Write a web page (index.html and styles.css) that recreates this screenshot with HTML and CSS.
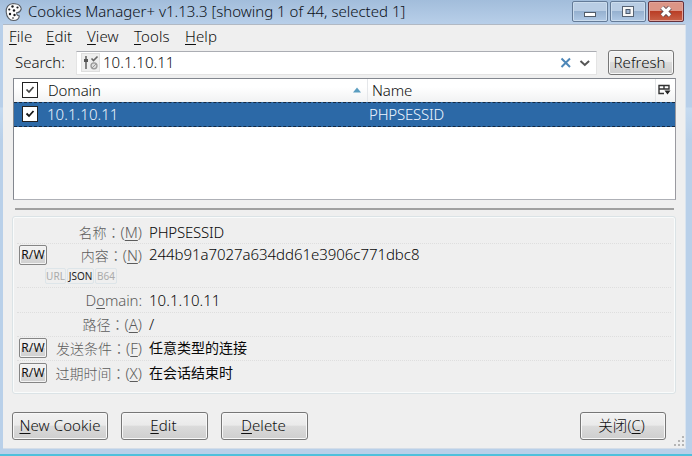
FILE: index.html
```
<!DOCTYPE html>
<html lang="zh-CN">
<head>
<meta charset="utf-8">
<title>Cookies Manager+</title>
<link rel="stylesheet" href="styles.css">
</head>
<body>
<div class="window">
  <header class="titlebar">
    <svg class="cookie" width="18" height="20" viewBox="0 0 18 20"><path d="M8 1.500C3 2 .8 6 1.200 10 1.500 15 4.500 18.500 8.500 18.500c3.500 0 5.500-2 5.800-4.500-2-.3-3-1.500-2.500-3.500 2 .3 3.500-1 4.500-3.500-.5-3-3-5-5-5-1-.4-2-.5-3.300-.5z" fill="#fcfcfc" stroke="#555b62" stroke-width="1.100"/><g fill="#17191c"><circle cx="7.500" cy="4.500" r="1.200"/><circle cx="4.300" cy="7.500" r="1.100"/><circle cx="9" cy="8.500" r="1.200"/><circle cx="12.500" cy="5.500" r="1.100"/><circle cx="5" cy="12" r="1.200"/><circle cx="9.500" cy="13" r="1.200"/><circle cx="8" cy="16" r=".8"/></g></svg>
    <h1 class="title">Cookies Manager+ v1.13.3 [showing 1 of 44, selected 1]</h1>
    <div class="controls">
      <span class="control"><svg width="34" height="19" viewBox="0 0 34 19"><rect x="11.500" y="10.500" width="11" height="4" fill="#fff" stroke="#515b68"/></svg></span>
      <span class="control"><svg width="34" height="19" viewBox="0 0 34 19"><rect x="11.500" y="4.500" width="11" height="10" fill="#f7f7f7" stroke="#566273"/><rect x="15" y="7.500" width="4" height="4" fill="#9fb5d2" stroke="#4c596b"/></svg></span>
      <span class="control close"><svg width="34" height="19" viewBox="0 0 34 19"><path d="M13 5.500l8 8M21 5.500l-8 8" stroke="#5d4a50" stroke-width="5"/><path d="M13 5.500l8 8M21 5.500l-8 8" stroke="#fff" stroke-width="3.200"/></svg></span>
    </div>
  </header>
  <main class="content">
    <nav class="menu"><span class="m-file"><u>F</u>ile</span><span class="m-edit"><u>E</u>dit</span><span class="m-view"><u>V</u>iew</span><span class="m-tools"><u>T</u>ools</span><span class="m-help"><u>H</u>elp</span></nav>
    <div class="search">
      <label class="search-label">Search:</label>
      <div class="field">
        <svg class="filter" width="19" height="19" viewBox="0 0 19 19"><rect x=".5" y=".5" width="18" height="18" fill="#eee" stroke="#dedede"/><path d="M5 3v13" stroke="#666" stroke-width="1.600"/><path d="M3 6h4v3H3z" fill="#555"/><path d="M10.500 5.500l2 2 4-4" fill="none" stroke="#666" stroke-width="1.600"/><circle cx="13" cy="12.800" r="3" fill="#ddd" stroke="#999" stroke-width="1.300"/><path d="M11 15l4-4" stroke="#999"/></svg>
        <span class="query">10.1.10.11</span>
        <svg class="field-icons" width="32" height="12" viewBox="0 0 32 12"><path d="M1.500 1.500l8.500 8.500M10 1.500L1.500 10" stroke="#4d87b8" stroke-width="2"/><path d="M20.500 4l4.300 4 4.300-4" fill="none" stroke="#555" stroke-width="2"/></svg>
      </div>
      <button class="button refresh"><span>Refresh</span></button>
    </div>
    <section class="tree">
      <div class="thead">
        <span class="check head-check"><svg width="10" height="10" viewBox="0 0 10 10"><path d="M1.500 4.500l2.500 2.500 4.500-5" fill="none" stroke="#444" stroke-width="1.700"/></svg></span>
        <span class="col-domain"><span class="t-domain">Domain</span><svg width="8" height="6" viewBox="0 0 8 6"><path d="M0 5.500L4 .5l4 5z" fill="#5a9dc0"/></svg></span>
        <span class="col-name"><span class="t-name">Name</span></span>
        <span class="picker"><svg width="13" height="12" viewBox="0 0 13 12"><path d="M1 1.500h10v3.500H1zM6 1.500V5M1 5v4.500h5" fill="none" stroke="#333" stroke-width="1.400"/><path d="M6.500 6.500h6l-3 4z" fill="#222"/></svg></span>
      </div>
      <div class="trow">
        <span class="check"><svg width="10" height="10" viewBox="0 0 10 10"><path d="M1.500 4.500l2.500 2.500 4.500-5" fill="none" stroke="#151515" stroke-width="1.800"/></svg></span>
        <span class="cell-domain"><span class="t-ip">10.1.10.11</span></span>
        <span class="t-sess">PHPSESSID</span>
      </div>
    </section>
    <div class="splitter"></div>
    <section class="details">
      <div class="line r1"><span class="label">名称<span class="colon" lang="zh-TW">：</span><span class="key">(<u>M</u>)</span></span><span class="value v-name">PHPSESSID</span></div>
      <div class="group r2">
        <div class="line"><button class="rw">R/W</button><span class="label">内容<span class="colon" lang="zh-TW">：</span><span class="key">(<u>N</u>)</span></span><span class="value v-hash">244b91a7027a634dd61e3906c771dbc8</span></div>
        <div class="tags"><span class="tag url">URL</span><span class="tag json">JSON</span><span class="tag b64">B64</span></div>
      </div>
      <div class="line r3"><span class="label t-dom">D<u>o</u>main:</span><span class="value v-ip">10.1.10.11</span></div>
      <div class="line r4"><span class="label">路径<span class="colon" lang="zh-TW">：</span><span class="key">(<u>A</u>)</span></span><span class="value">/</span></div>
      <div class="line r5"><button class="rw">R/W</button><span class="label">发送条件<span class="colon" lang="zh-TW">：</span><span class="key">(<u>F</u>)</span></span><span class="value cn">任意类型的连接</span></div>
      <div class="line r6"><button class="rw">R/W</button><span class="label">过期时间<span class="colon" lang="zh-TW">：</span><span class="key">(<u>X</u>)</span></span><span class="value cn">在会话结束时</span></div>
    </section>
    <footer class="actions">
      <button class="button new"><span><u>N</u>ew Cookie</span></button>
      <button class="button mid"><span><u>E</u>dit</span></button>
      <button class="button mid"><span><u>D</u>elete</span></button>
      <button class="button shut"><span>关闭(<u>C</u>)</span></button>
    </footer>
    <svg class="grip" width="11" height="11" viewBox="0 0 11 11"><path d="M8 0h2v2H8zM4 4h2v2H4zM8 4h2v2H8zM0 8h2v2H0zM4 8h2v2H4zM8 8h2v2H8z" fill="#b5b5b5"/></svg>
  </main>
</div>
</body>
</html>
```
FILE: styles.css
```
* { box-sizing: border-box; }
body {
  margin: 0;
  font: 300 15px/20px "Noto Sans", "Noto Sans CJK SC", sans-serif;
  color: #101010;
}
svg { display: block; flex: none; }
u { text-decoration-thickness: 1px; text-underline-offset: 2px; }
button { font: inherit; color: inherit; padding: 0; }
span { white-space: nowrap; }
.window {
  width: 692px;
  height: 456px;
  padding: 0 6px 0 3px;
  background: linear-gradient(#a2bddb, #b8cfe9 24px, #b8cfe9 107px, #c5daf0 108px, #b9d0e9 140px);
  border-bottom: 2px solid #4fc0dc;
}
.titlebar { display: flex; height: 24px; padding-left: 2px; }
.cookie { margin-top: 2px; }
.title { margin: 1px 0 0 5px; font-size: 15px; font-weight: 300; line-height: 20px; white-space: nowrap; color: #0c1118; }
.controls { display: flex; gap: 2px; margin: 1px 2px 0 auto; }
.control {
  width: 36px;
  height: 21px;
  border: 1px solid #647b98;
  border-radius: 2px;
  box-shadow: inset 0 0 0 1px #cbdced;
  background: linear-gradient(#b9cde4 45%, #96b1d0 50%, #b0c9e5);
}
.close { border-color: #64313c; box-shadow: inset 0 0 0 1px #e2a49a; background: linear-gradient(#dc9586 45%, #ba3e26 50%, #c86248); }
.content {
  position: relative;
  height: 425px;
  background: #efefef;
  border-top: 1px solid #b1b9c4;
  border-right: 1px solid #d9e4ef;
  border-bottom: 1px solid #d4dde8;
}
.menu { display: flex; height: 25px; padding: 1px 0 0 6px; letter-spacing: .1px; }
.menu span { flex: none; }
.m-file { width: 37px; }
.m-edit { width: 41px; }
.m-view { width: 47px; }
.m-tools { width: 51px; }
.search { display: flex; height: 28px; padding-left: 12px; }
.search-label { width: 61px; padding-top: 2px; }
.field { display: flex; width: 521px; height: 24px; margin-top: 1px; background: #fff; border: 1px solid #e4e4e4; border-top-color: #abadb3; }
.filter { margin: 1px 0 0 4px; }
.query { margin: 0 auto 0 3px; letter-spacing: .05px; }
.field-icons { margin: 5px 4px 0 0; }
.button {
  border: 1px solid #777;
  border-radius: 3px;
  box-shadow: inset 0 0 0 1px #f8f8f8;
  background: linear-gradient(#f2f2f2, #eaeaea 47%, #dbdbdb 50%, #cecece);
}
.button span { display: block; margin: -2px 0 0; }
.refresh { width: 66px; height: 25px; margin-left: 11px; padding-right: 3px; }
.tree { width: 663px; height: 122px; margin-left: 10px; background: #fff; border: 1px solid #83878f; border-right-color: #9a9aa0; border-bottom-color: #aeb0b6; }
.thead { display: flex; height: 23px; background: linear-gradient(#fff 35%, #f1f2f3); }
.check { display: grid; place-items: center; flex: none; width: 16px; height: 16px; margin: 4px 0 0 8px; background: #fff; border: 1px solid #222; }
.head-check { margin-top: 3px; }
.col-domain { display: flex; width: 330px; padding: 1px 6px 0 10px; justify-content: space-between; border-right: 1px solid #e5e7ea; letter-spacing: -.1px; }
.col-domain svg { margin-top: 7px; }
.col-name { width: 286px; padding: 1px 0 0 4px; margin-right: 1px; letter-spacing: -.1px; }
.picker { padding: 5px 0 0 2px; border-left: 1px solid #e3e5e7; }
.trow { display: flex; height: 25px; background: #2c69a7; color: #edf5ff; border: dashed #152a42; border-width: 1px 0; }
.trow .check { margin-top: 3px; }
.cell-domain { width: 331px; padding: 1px 0 0 9px; letter-spacing: .05px; }
.t-sess { padding-top: 1px; letter-spacing: -.2px; }
.splitter { width: 659px; height: 2px; margin: 8px 0 6px 12px; background: #a0a0a0; }
.details { width: 664px; height: 178px; margin-left: 9px; padding: 1px 4px; border: 1px solid #dbe3e6; border-radius: 3px; box-shadow: inset 0 0 0 1px #f9fbfb; }
.line { display: flex; align-items: flex-start; }
.r1, .r2, .r3, .r4, .r5 { border-bottom: 1px dotted #dedede; }
.r1 { height: 26px; padding-top: 4px; }
.r2 { height: 44px; padding-top: 1px; }
.r3 { height: 25px; padding-top: 2px; }
.r4 { height: 24px; padding-top: 1px; }
.r5 { height: 24px; padding-top: 1px; }
.r6 { height: 26px; padding-top: 2px; }
.rw { width: 28px; height: 20px; margin: 0 -30px 0 2px; border: 1px solid #858585; border-radius: 2px; font-size: 12px; font-weight: 400; line-height: 18px; letter-spacing: .1px; background: linear-gradient(#f0f0f0 48%, #dadada 52%, #d0d0d0); box-shadow: inset 0 0 0 1px #f4f4f4; }
.label { width: 125px; flex: none; text-align: right; color: #5c5c5c; font-size: 14px; }
.key { font-size: 15px; }
.t-dom { font-size: 15px; letter-spacing: -.1px; }
.colon { font-family: "Noto Sans CJK TC", sans-serif; line-height: 1; }
.value { margin-left: 7px; color: #080808; }
.v-name { letter-spacing: -.2px; }
.v-hash { margin-top: -1px; letter-spacing: -.05px; }
.v-ip { letter-spacing: .05px; }
.cn { font-size: 14px; font-weight: 400; }
.tags { display: flex; gap: 1px; padding: 3px 0 0 28px; font-size: 10px; font-weight: 400; line-height: 14px; text-align: center; color: #aaa; }
.r2 .line { height: 20px; }
.tag { width: 21px; height: 16px; border: 1px solid #dde5e9; border-radius: 2px; }
.json { width: 27px; color: #222; }
.b64 { width: 22px; }
.actions { display: flex; gap: 13px; margin: 18px 19px 0 9px; }
.actions .button { height: 28px; letter-spacing: .1px; }
.new { width: 96px; }
.mid { width: 87px; }
.mid span { padding-right: 2px; }
.shut { width: 86px; margin-left: auto; }
.shut span { font-size: 14.5px; padding-right: 3px; }
.grip { position: absolute; right: 0; bottom: 1px; }
```
